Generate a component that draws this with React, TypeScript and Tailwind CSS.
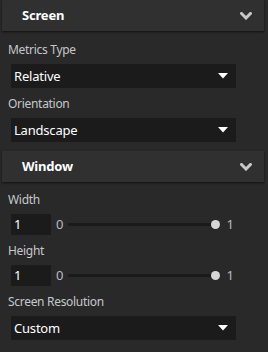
import React from "react";

const font = { fontFamily: '"Noto Sans", "Open Sans", sans-serif' };

function Chevron() {
  return (
    <svg width="12" height="8" viewBox="0 0 12 8" className="block">
      <path d="M1.5 1.5 L6 6 L10.5 1.5" fill="none" stroke="#c8c8c8" strokeWidth="3" strokeLinecap="square" />
    </svg>
  );
}

function Header({ title }: { title: string }) {
  return (
    <div className="ml-[2px] mr-[4px] h-[31px] bg-[#303030] shadow-[0_1px_2px_rgba(0,0,0,0.6)] flex items-center justify-between pl-[20px] pr-[12px]">
      <span className="text-[13px] font-bold text-white leading-none tracking-[-0.2px]">{title}</span>
      <Chevron />
    </div>
  );
}

function Label({ text, mt }: { text: string; mt: string }) {
  return <div className={`${mt} ml-[8px] h-[16px] leading-[16px] text-[12px] tracking-[-0.3px] text-[#c4c8cc]`}>{text}</div>;
}

function Dropdown({ value }: { value: string }) {
  return (
    <div className="mt-[6px] ml-[11px] w-[225px] h-[24px] bg-[#1b1b1b] flex items-center justify-between pl-[3px] pr-[4px]">
      <span className="text-[13px] text-white leading-none tracking-[-0.2px]">{value}</span>
      <svg width="10" height="6" viewBox="0 0 10 6" className="block mr-[4px]">
        <path d="M0 0 H10 L5 5.5 Z" fill="#ffffff" />
      </svg>
    </div>
  );
}

function SliderRow() {
  return (
    <div className="mt-[6px] ml-[11px] flex items-center h-[21px]">
      <div className="w-[40px] h-[21px] bg-[#1b1b1b] flex items-center pl-[3px]">
        <span className="text-[13px] text-white leading-none">1</span>
      </div>
      <span className="ml-[5px] text-[13px] text-[#b8bcc0] leading-none">0</span>
      <div className="ml-[5px] w-[152px] h-[9px] flex items-center relative">
        <div className="w-full h-[3px] bg-[#1a1a1a] rounded-full" />
        <div className="absolute right-0 w-[9px] h-[9px] rounded-full bg-[#d6d6d6]" />
      </div>
      <span className="ml-[6px] text-[13px] text-[#b8bcc0] leading-none">1</span>
    </div>
  );
}

export default function App() {
  return (
    <div className="w-[268px] h-[352px] bg-[#292929] flex flex-col overflow-hidden" style={font}>
      <Header title="Screen" />
      <Label text="Metrics Type" mt="mt-[11px]" />
      <Dropdown value="Relative" />
      <Label text="Orientation" mt="mt-[8px]" />
      <Dropdown value="Landscape" />
      <div className="mt-[9px]">
        <Header title="Window" />
      </div>
      <Label text="Width" mt="mt-[10px]" />
      <SliderRow />
      <Label text="Height" mt="mt-[8px]" />
      <SliderRow />
      <Label text="Screen Resolution" mt="mt-[8px]" />
      <Dropdown value="Custom" />
    </div>
  );
}
